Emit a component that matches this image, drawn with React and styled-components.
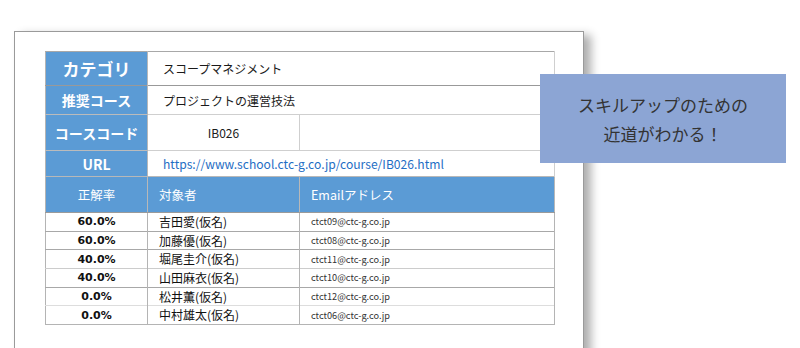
import React from "react";
import styled, { createGlobalStyle } from "styled-components";

const Global = createGlobalStyle`
  html, body { margin: 0; padding: 0; background: #fff; }
  body { width: 800px; height: 348px; overflow: hidden;
    font-family: "Noto Sans CJK JP", "Noto Sans", sans-serif; color: #222; }
`;

const Stage = styled.div`
  position: relative;
  width: 800px;
  height: 348px;
  overflow: hidden;
  padding: 31px 0 0 14px;
  box-sizing: border-box;
`;

const Paper = styled.div`
  width: 570px;
  height: 340px;
  box-sizing: border-box;
  border: 1px solid #9a9a9a;
  border-bottom: none;
  background: #fff;
  box-shadow: 7px 4px 9px rgba(0, 0, 0, 0.32);
  padding: 19px 0 0 30px;
`;

const Table = styled.table`
  border-collapse: collapse;
  width: 509px;
  table-layout: fixed;
  border: 1px solid #b4b4b4;
`;

const Label = styled.th`
  background: #5b9bd5;
  color: #fff;
  font-weight: 700;
  font-size: ${(p) => p.$size || 14}px;
  height: ${(p) => p.$h}px;
  padding: 0;
  text-align: center;
  border-top: 1px solid ${(p) => p.$line || "#a8a8a8"};
  border-right: 1px solid #b8b8b8;
  box-sizing: border-box;
`;

const Value = styled.td`
  font-size: 12px;
  color: #1a1a1a;
  padding: 0 0 0 ${(p) => (p.$center ? 0 : 15)}px;
  text-align: ${(p) => (p.$center ? "center" : "left")};
  border-top: 1px solid ${(p) => p.$line || "#a8a8a8"};
  border-right: 1px solid #cfcfcf;
  box-sizing: border-box;
`;

const Link = styled.a`
  color: #1f6ec4;
  text-decoration: none;
  font-family: "Noto Sans CJK JP", sans-serif;
  font-size: 12.1px;
`;

const Head = styled.th`
  background: #5b9bd5;
  color: #fff;
  font-weight: 400;
  font-size: 12.5px;
  height: 36px;
  padding: 0 0 0 ${(p) => (p.$center ? 0 : 11)}px;
  text-align: ${(p) => (p.$center ? "center" : "left")};
  border-top: 1px solid #b8b8b8;
  border-right: 1px solid #b8b8b8;
  border-bottom: 1px solid #9a9a9a;
  box-sizing: border-box;
`;

const Cell = styled.td`
  height: 18.7px;
  padding: 0 0 0 ${(p) => (p.$center ? 0 : 11)}px;
  text-align: ${(p) => (p.$center ? "center" : "left")};
  font-family: ${(p) => (p.$bold ? '"DejaVu Sans", sans-serif' : "inherit")};
  font-size: ${(p) => p.$size || 12}px;
  font-weight: ${(p) => (p.$bold ? 700 : 400)};
  color: ${(p) => p.$color || "#111"};
  border-top: 1px solid ${(p) => p.$line || "#a8a8a8"};
  border-right: 1px solid #b4b4b4;
  box-sizing: border-box;
  line-height: 1;
  white-space: nowrap;
`;

const Callout = styled.div`
  position: absolute;
  left: 540px;
  top: 74px;
  width: 246px;
  height: 89px;
  background: #8ca5d4;
  color: #333;
  font-size: 17px;
  line-height: 29px;
  text-align: center;
  display: flex;
  flex-direction: column;
  justify-content: center;
`;

const rows = [
  ["60.0%", "吉田愛(仮名)", "ctct09@ctc-g.co.jp", "#a8a8a8"],
  ["60.0%", "加藤優(仮名)", "ctct08@ctc-g.co.jp", "#a8a8a8"],
  ["40.0%", "堀尾圭介(仮名)", "ctct11@ctc-g.co.jp", "#a8a8a8"],
  ["40.0%", "山田麻衣(仮名)", "ctct10@ctc-g.co.jp", "#cccccc"],
  ["0.0%", "松井薫(仮名)", "ctct12@ctc-g.co.jp", "#a8a8a8"],
  ["0.0%", "中村雄太(仮名)", "ctct06@ctc-g.co.jp", "#dddddd"],
];

export default function App() {
  return (
    <Stage>
      <Global />
      <Paper>
        <Table>
          <colgroup>
            <col style={{ width: 102 }} />
            <col style={{ width: 152 }} />
            <col style={{ width: 255 }} />
          </colgroup>
          <tbody>
            <tr>
              <Label $h={34} $size={17}>カテゴリ</Label>
              <Value colSpan={2}>スコープマネジメント</Value>
            </tr>
            <tr>
              <Label $h={29} $line="#999">推奨コース</Label>
              <Value colSpan={2} $line="#999">プロジェクトの運営技法</Value>
            </tr>
            <tr>
              <Label $h={36} $line="#bbb">コースコード</Label>
              <Value $center $line="#cfcfcf">IB026</Value>
              <Value $line="#cfcfcf"></Value>
            </tr>
            <tr>
              <Label $h={26} $line="#bbb">URL</Label>
              <Value colSpan={2} $line="#cfcfcf">
                <Link href="#">https://www.school.ctc-g.co.jp/course/IB026.html</Link>
              </Value>
            </tr>
            <tr>
              <Head $center>正解率</Head>
              <Head>対象者</Head>
              <Head>Emailアドレス</Head>
            </tr>
            {rows.map(([pct, name, mail, line], i) => (
              <tr key={i}>
                <Cell $center $bold $size={11} $line={i === 0 ? "#9a9a9a" : line}>{pct}</Cell>
                <Cell $line={i === 0 ? "#9a9a9a" : line}>{name}</Cell>
                <Cell $size={9.2} $color="#333" $line={i === 0 ? "#9a9a9a" : line}>{mail}</Cell>
              </tr>
            ))}
          </tbody>
        </Table>
      </Paper>
      <Callout>
        <span>スキルアップのための</span>
        <span>近道がわかる！</span>
      </Callout>
    </Stage>
  );
}
